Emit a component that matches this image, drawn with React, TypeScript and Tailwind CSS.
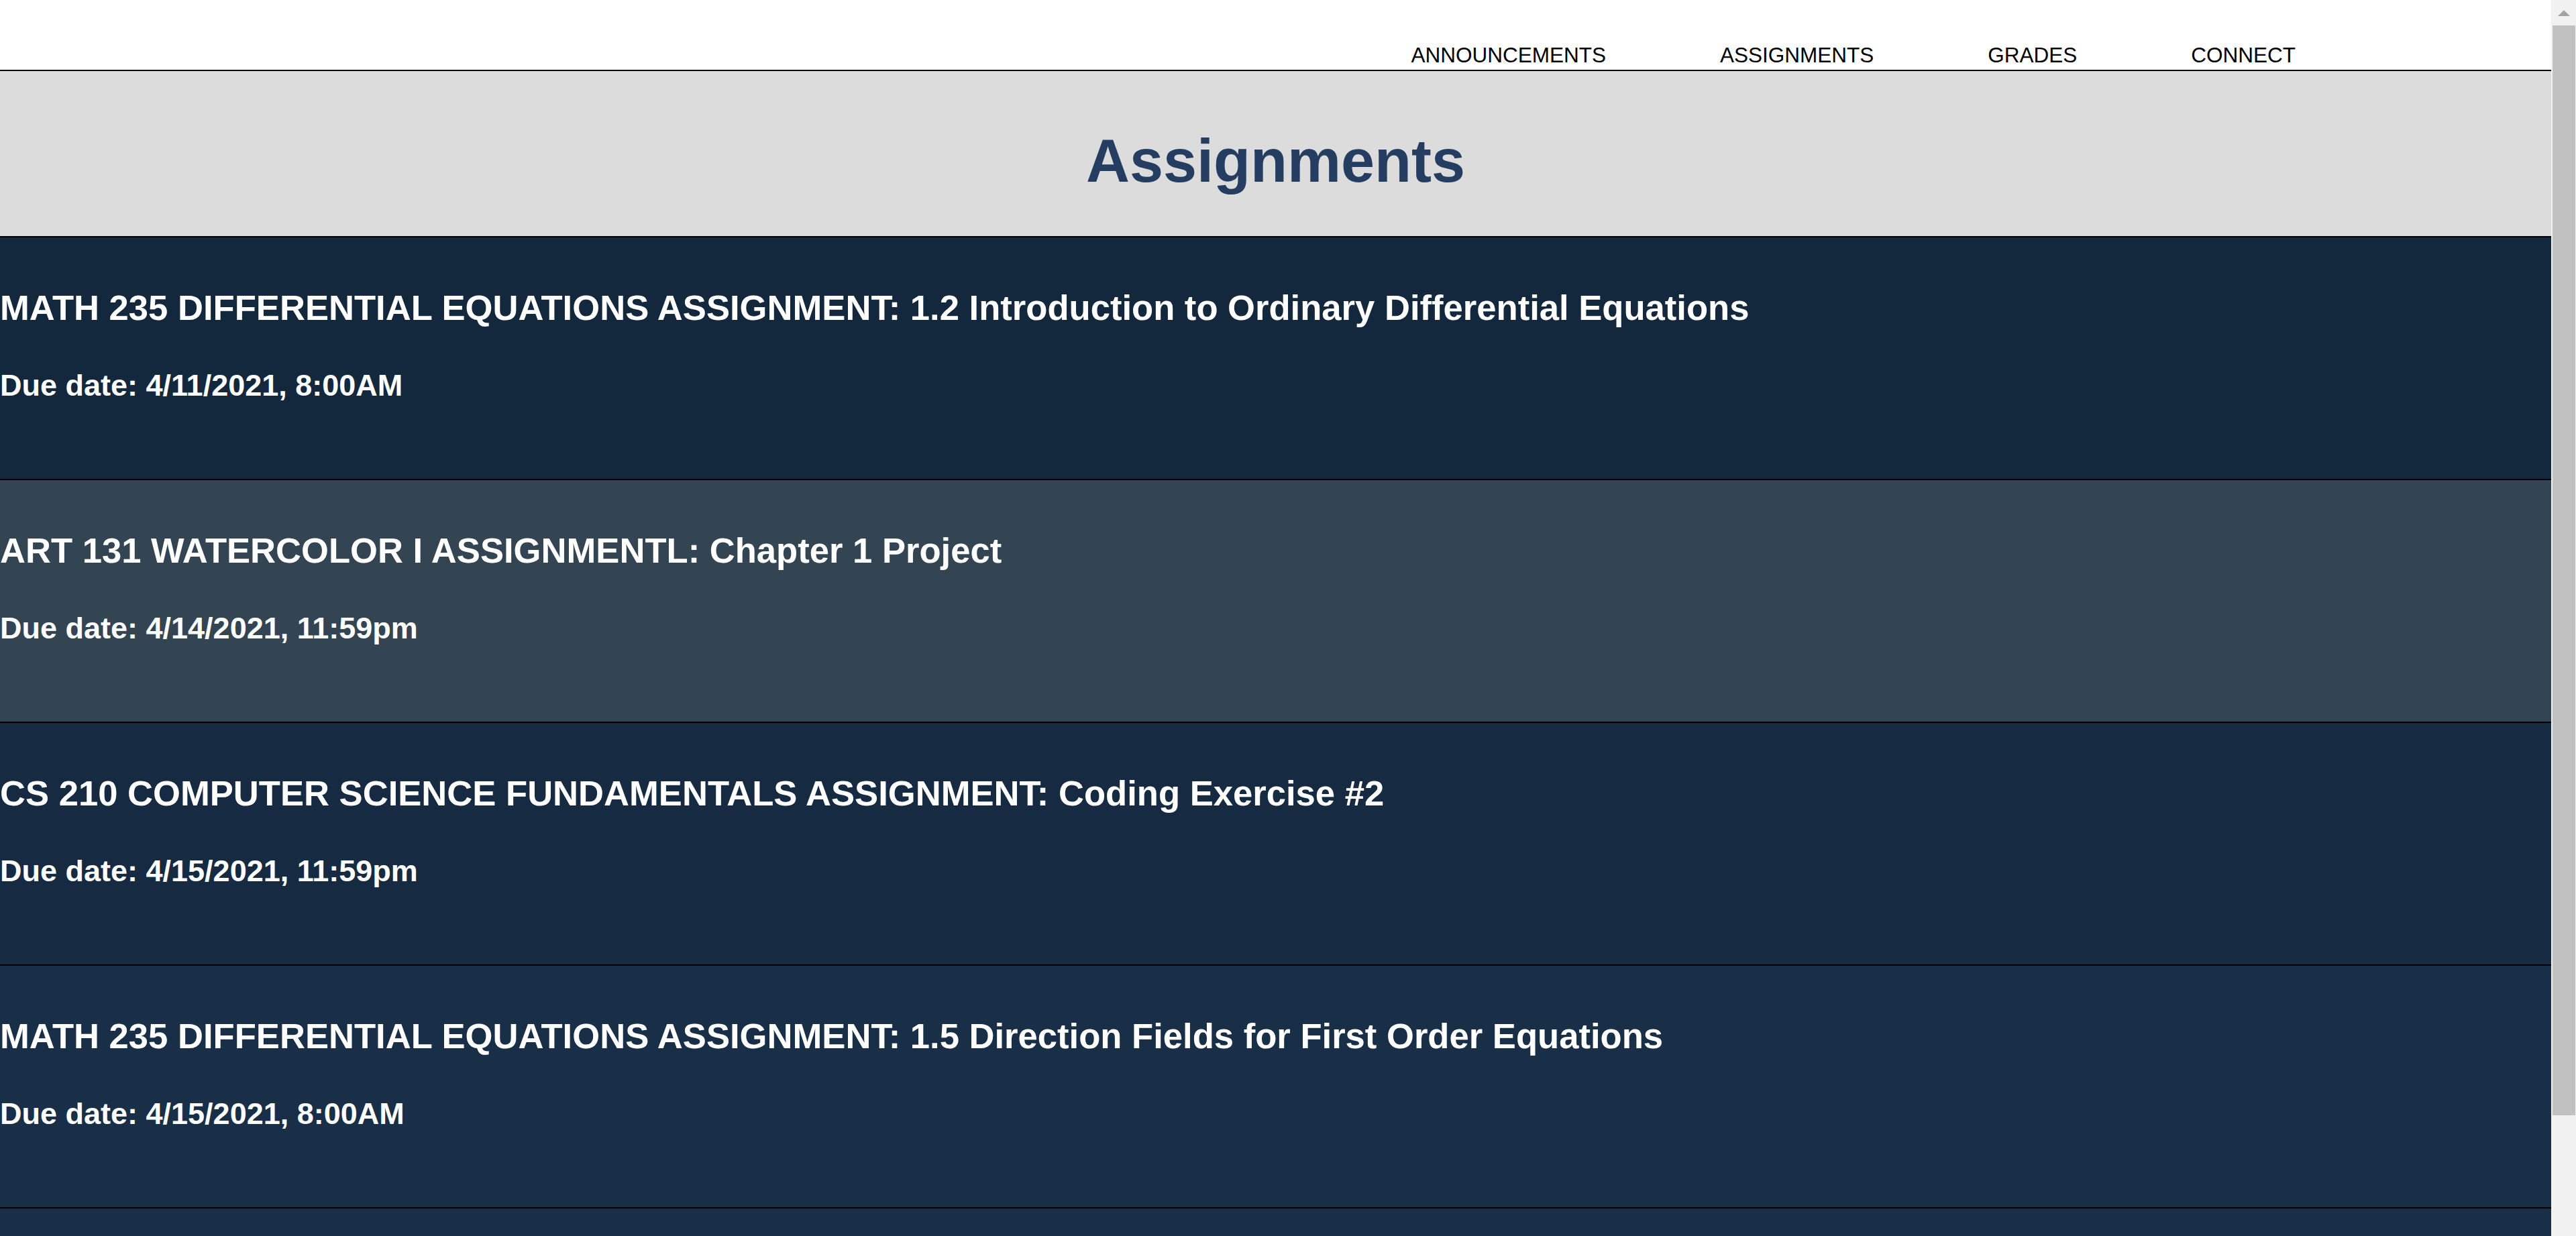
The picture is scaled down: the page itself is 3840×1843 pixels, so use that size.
import React from 'react';

type Assignment = {
    title: string
    due: string
    bg: string
}

const assignments: Assignment[] = [
    {
        title: 'MATH 235 DIFFERENTIAL EQUATIONS ASSIGNMENT: 1.2 Introduction to Ordinary Differential Equations',
        due: 'Due date: 4/11/2021, 8:00AM',
        bg: 'bg-[#13273d]',
    },
    {
        title: 'ART 131 WATERCOLOR I ASSIGNMENTL: Chapter 1 Project',
        due: 'Due date: 4/14/2021, 11:59pm',
        bg: 'bg-[#334452]',
    },
    {
        title: 'CS 210 COMPUTER SCIENCE FUNDAMENTALS ASSIGNMENT: Coding Exercise #2',
        due: 'Due date: 4/15/2021, 11:59pm',
        bg: 'bg-[#162b42]',
    },
    {
        title: 'MATH 235 DIFFERENTIAL EQUATIONS ASSIGNMENT: 1.5 Direction Fields for First Order Equations',
        due: 'Due date: 4/15/2021, 8:00AM',
        bg: 'bg-[#182f47]',
    },
]

const navLinks = ['ANNOUNCEMENTS', 'ASSIGNMENTS', 'GRADES', 'CONNECT']

const AssignmentCard = ({ title, due, bg }: Assignment) => {
    return (
        <div className={`${bg} border-b-2 border-black pt-[75px] pb-[114px] text-white`}>
            <h3 className="text-[52.6px] leading-[60px] font-bold whitespace-nowrap">{title}</h3>
            <h4 className="mt-[60px] text-[45px] leading-[51px] font-bold whitespace-nowrap">{due}</h4>
        </div>
    )
}

const Scrollbar = () => {
    return (
        <div className="w-[37px] shrink-0 bg-[#f1f1f1] flex flex-col">
            <div className="h-[38px] flex items-start justify-center pt-[15px] pl-[1px]">
                <div className="w-0 h-0 border-l-[9px] border-r-[9px] border-b-[9px] border-l-transparent border-r-transparent border-b-[#a3a3a3]" />
            </div>
            <div className="pl-[2px] pr-[1px]">
                <div className="h-[1625px] bg-[#c1c1c1]" />
            </div>
        </div>
    )
}

export default function App() {
    return (
        <div className="flex h-[1843px] w-full overflow-hidden bg-white font-['Liberation_Sans',Arial,sans-serif]">
            <div className="flex-1 min-w-0 overflow-hidden">
                <nav className="border-b-2 border-black pt-[64px] pb-[4px]">
                    <ul className="flex justify-end gap-[170px] pr-[381px]">
                        {navLinks.map((link) => (
                            <li key={link}>
                                <a href="#" className="text-[31.5px] leading-[36px] text-black">{link}</a>
                            </li>
                        ))}
                    </ul>
                </nav>

                <header className="bg-[#dcdcdc] border-b-2 border-black pt-[84px] pb-[62px]">
                    <h1 className="text-center text-[90px] leading-[100px] font-bold text-[#253d61]">Assignments</h1>
                </header>

                {assignments.map((a, i) => (
                    <AssignmentCard key={i} {...a} />
                ))}
                <div className="bg-[#182f47] h-[360px] border-b-2 border-black" />
            </div>
            <Scrollbar />
        </div>
    )
}
